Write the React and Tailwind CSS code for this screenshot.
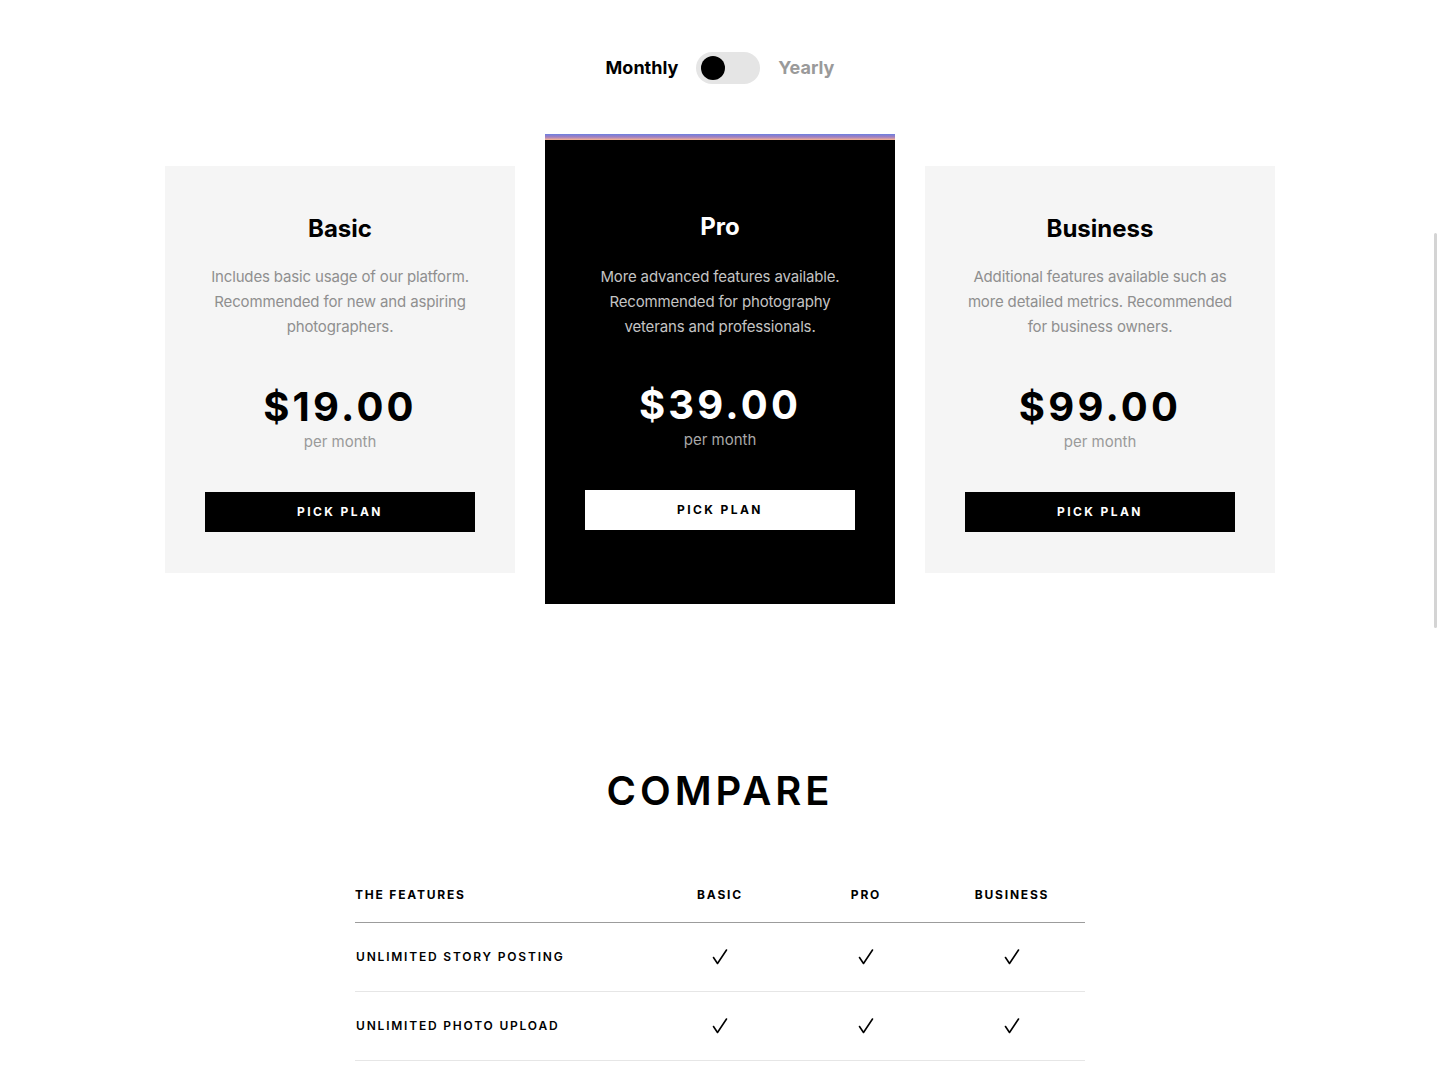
import { useState } from "react";

const plans = [
  {
    name: "Basic",
    desc: ["Includes basic usage of our platform.", "Recommended for new and aspiring", "photographers."],
    price: "$19.00",
  },
  {
    name: "Pro",
    desc: ["More advanced features available.", "Recommended for photography", "veterans and professionals."],
    price: "$39.00",
    featured: true,
  },
  {
    name: "Business",
    desc: ["Additional features available such as", "more detailed metrics. Recommended", "for business owners."],
    price: "$99.00",
  },
];

const features = ["Unlimited story posting", "Unlimited photo upload"];

const Check = () => (
  <svg width="18" height="18" viewBox="0 0 18 18" fill="none" stroke="black" strokeWidth="1.6" strokeLinecap="round" strokeLinejoin="round">
    <path d="M2.5 9.5 L6.5 15.5 L15.5 2" />
  </svg>
);

const PlanCard = ({ plan }) => {
  const dark = plan.featured;
  return (
    <div className={dark ? "w-[350px] flex flex-col" : "w-[350px] bg-[#f5f5f5]"}>
      {dark && <div className="h-[6px] bg-gradient-to-b from-[#6a7fe0] via-[#a27fbf] to-[#f7b189]" />}
      <div className={dark ? "bg-black px-10 pt-[71px] pb-[74px] flex flex-col items-center text-center" : "px-10 pt-[47px] pb-[41px] flex flex-col items-center text-center"}>
        <h2 className={dark ? "text-2xl leading-8 font-bold text-white" : "text-2xl leading-8 font-bold text-black"}>{plan.name}</h2>
        <p className={dark ? "mt-[21px] text-[15px] leading-[25px] text-[#c4c4c4] whitespace-nowrap tracking-[-0.01em]" : "mt-[19px] text-[15px] leading-[25px] text-[#8f8f8f] whitespace-nowrap tracking-[-0.01em]"}>
          {plan.desc.map((line, i) => (
            <span key={i} className="block">{line}</span>
          ))}
        </p>
        <div className={dark ? "mt-[40px] text-[40px] leading-[52px] font-bold tracking-[0.08em] text-white" : "mt-[42px] text-[40px] leading-[52px] font-bold tracking-[0.08em] text-black"}>
          {plan.price}
        </div>
        <div className={dark ? "-mt-[2px] text-[15px] leading-[22px] text-[#a8a8a8]" : "-mt-[2px] text-[15px] leading-[22px] text-[#9a9a9a]"}>per month</div>
        <button className={dark ? "mt-[39px] w-full h-10 bg-white text-black text-xs font-bold tracking-[0.2em]" : "mt-[39px] w-full h-10 bg-black text-white text-xs font-bold tracking-[0.2em]"}>
          PICK PLAN
        </button>
      </div>
    </div>
  );
};

export default function App() {
  const [yearly, setYearly] = useState(false);

  return (
    <div className="min-h-screen bg-white text-black font-['Inter','Liberation_Sans',sans-serif] pb-20">
      {/* billing toggle */}
      <div className="pt-[52px] flex items-center justify-center gap-[18px]">
        <span className={yearly ? "text-lg font-bold text-[#9a9a9a]" : "text-lg font-bold text-black"}>Monthly</span>
        <button
          onClick={() => setYearly(!yearly)}
          className={yearly ? "w-16 h-8 rounded-full bg-[#e5e5e5] flex items-center justify-end px-[5px]" : "w-16 h-8 rounded-full bg-[#e5e5e5] flex items-center justify-start px-[5px]"}
        >
          <span className="w-6 h-6 rounded-full bg-black" />
        </button>
        <span className={yearly ? "text-lg font-bold text-black" : "text-lg font-bold text-[#9a9a9a]"}>Yearly</span>
      </div>

      {/* plans */}
      <div className="mt-[50px] flex items-center justify-center gap-[30px]">
        {plans.map((p) => (
          <PlanCard key={p.name} plan={p} />
        ))}
      </div>

      {/* compare */}
      <h2 className="mt-[163px] text-center text-[40px] leading-[48px] font-semibold tracking-[0.1em]">COMPARE</h2>

      <div className="mt-[52px] mx-auto w-[730px]">
        <div className="grid grid-cols-[292px_146px_146px_146px] h-14 items-center border-b border-[#9c9c9c] text-xs font-bold tracking-[0.15em]">
          <span>THE FEATURES</span>
          <span className="text-center">BASIC</span>
          <span className="text-center">PRO</span>
          <span className="text-center">BUSINESS</span>
        </div>
        {features.map((f) => (
          <div key={f} className="grid grid-cols-[292px_146px_146px_146px] h-[69px] items-center border-b border-[#e6e6e6] text-xs font-semibold tracking-[0.15em] uppercase">
            <span className="pl-px">{f}</span>
            <span className="flex justify-center"><Check /></span>
            <span className="flex justify-center"><Check /></span>
            <span className="flex justify-center"><Check /></span>
          </div>
        ))}
      </div>

      {/* overlay scrollbar thumb */}
      <div className="fixed right-[3px] top-[233px] w-[3px] h-[395px] rounded-full bg-[#d4d4d4]" />
    </div>
  );
}
